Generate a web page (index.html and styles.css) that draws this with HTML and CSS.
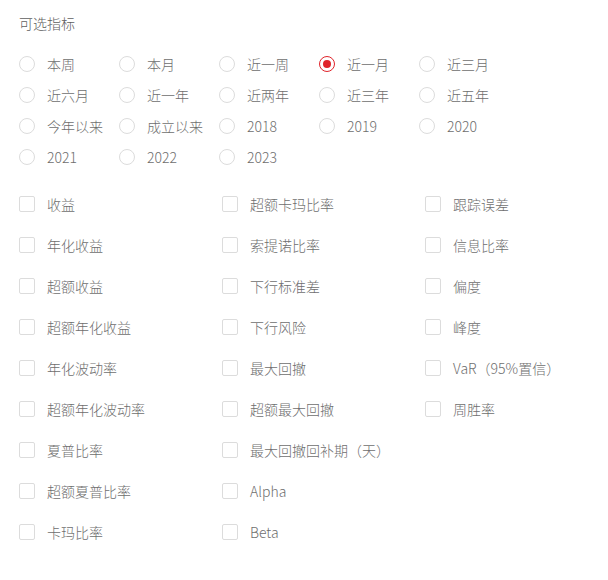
FILE: index.html
```html
<!DOCTYPE html>
<html lang="zh-CN">
<head>
<meta charset="UTF-8">
<title>可选指标</title>
<link rel="stylesheet" href="styles.css">
</head>
<body>

<div class="panel">
  <div class="title">可选指标</div>

  <div class="radio-group">
    <label class="radio"><span class="circle"></span>本周</label>
    <label class="radio"><span class="circle"></span>本月</label>
    <label class="radio"><span class="circle"></span>近一周</label>
    <label class="radio checked"><span class="circle"></span>近一月</label>
    <label class="radio"><span class="circle"></span>近三月</label>
    <label class="radio"><span class="circle"></span>近六月</label>
    <label class="radio"><span class="circle"></span>近一年</label>
    <label class="radio"><span class="circle"></span>近两年</label>
    <label class="radio"><span class="circle"></span>近三年</label>
    <label class="radio"><span class="circle"></span>近五年</label>
    <label class="radio"><span class="circle"></span>今年以来</label>
    <label class="radio"><span class="circle"></span>成立以来</label>
    <label class="radio"><span class="circle"></span>2018</label>
    <label class="radio"><span class="circle"></span>2019</label>
    <label class="radio"><span class="circle"></span>2020</label>
    <label class="radio"><span class="circle"></span>2021</label>
    <label class="radio"><span class="circle"></span>2022</label>
    <label class="radio"><span class="circle"></span>2023</label>
  </div>

  <div class="check-group">
    <label class="check"><span class="box"></span>收益</label>
    <label class="check"><span class="box"></span>超额卡玛比率</label>
    <label class="check"><span class="box"></span>跟踪误差</label>
    <label class="check"><span class="box"></span>年化收益</label>
    <label class="check"><span class="box"></span>索提诺比率</label>
    <label class="check"><span class="box"></span>信息比率</label>
    <label class="check"><span class="box"></span>超额收益</label>
    <label class="check"><span class="box"></span>下行标准差</label>
    <label class="check"><span class="box"></span>偏度</label>
    <label class="check"><span class="box"></span>超额年化收益</label>
    <label class="check"><span class="box"></span>下行风险</label>
    <label class="check"><span class="box"></span>峰度</label>
    <label class="check"><span class="box"></span>年化波动率</label>
    <label class="check"><span class="box"></span>最大回撤</label>
    <label class="check"><span class="box"></span>VaR（95%置信）</label>
    <label class="check"><span class="box"></span>超额年化波动率</label>
    <label class="check"><span class="box"></span>超额最大回撤</label>
    <label class="check"><span class="box"></span>周胜率</label>
    <label class="check"><span class="box"></span>夏普比率</label>
    <label class="check"><span class="box"></span>最大回撤回补期（天）</label>
    <label class="check"></label>
    <label class="check"><span class="box"></span>超额夏普比率</label>
    <label class="check"><span class="box"></span>Alpha</label>
    <label class="check"></label>
    <label class="check"><span class="box"></span>卡玛比率</label>
    <label class="check"><span class="box"></span>Beta</label>
  </div>
</div>

</body>
</html>
```

FILE: styles.css
```css
body {
  margin: 0;
  background: #fff;
  font-family: "Noto Sans CJK SC", "Noto Sans", sans-serif;
  font-size: 14px;
  font-weight: 300;
  color: #6e6e6e;
}
.panel {
  padding: 12px 19px;
}
.title {
  line-height: 22px;
  color: #606060;
}
.radio-group {
  margin-top: 14.5px;
  display: grid;
  grid-template-columns: repeat(5, 100px);
  grid-auto-rows: 31px;
}
.radio {
  display: flex;
  align-items: center;
  cursor: pointer;
}
.circle {
  width: 16px;
  height: 16px;
  box-sizing: border-box;
  border: 1px solid #dcdcdc;
  border-radius: 50%;
  margin-right: 12px;
  display: flex;
  align-items: center;
  justify-content: center;
  flex-shrink: 0;
}
.radio.checked .circle {
  border-color: #e0242b;
}
.radio.checked .circle::after {
  content: "";
  width: 8px;
  height: 8px;
  border-radius: 50%;
  background: #e0242b;
}
.check-group {
  margin-top: 11px;
  display: grid;
  grid-template-columns: repeat(3, 203px);
  grid-auto-rows: 41px;
}
.check {
  display: flex;
  align-items: center;
  cursor: pointer;
}
.box {
  width: 16px;
  height: 16px;
  box-sizing: border-box;
  border: 1px solid #dcdcdc;
  border-radius: 2px;
  margin-right: 12px;
  flex-shrink: 0;
}
```
